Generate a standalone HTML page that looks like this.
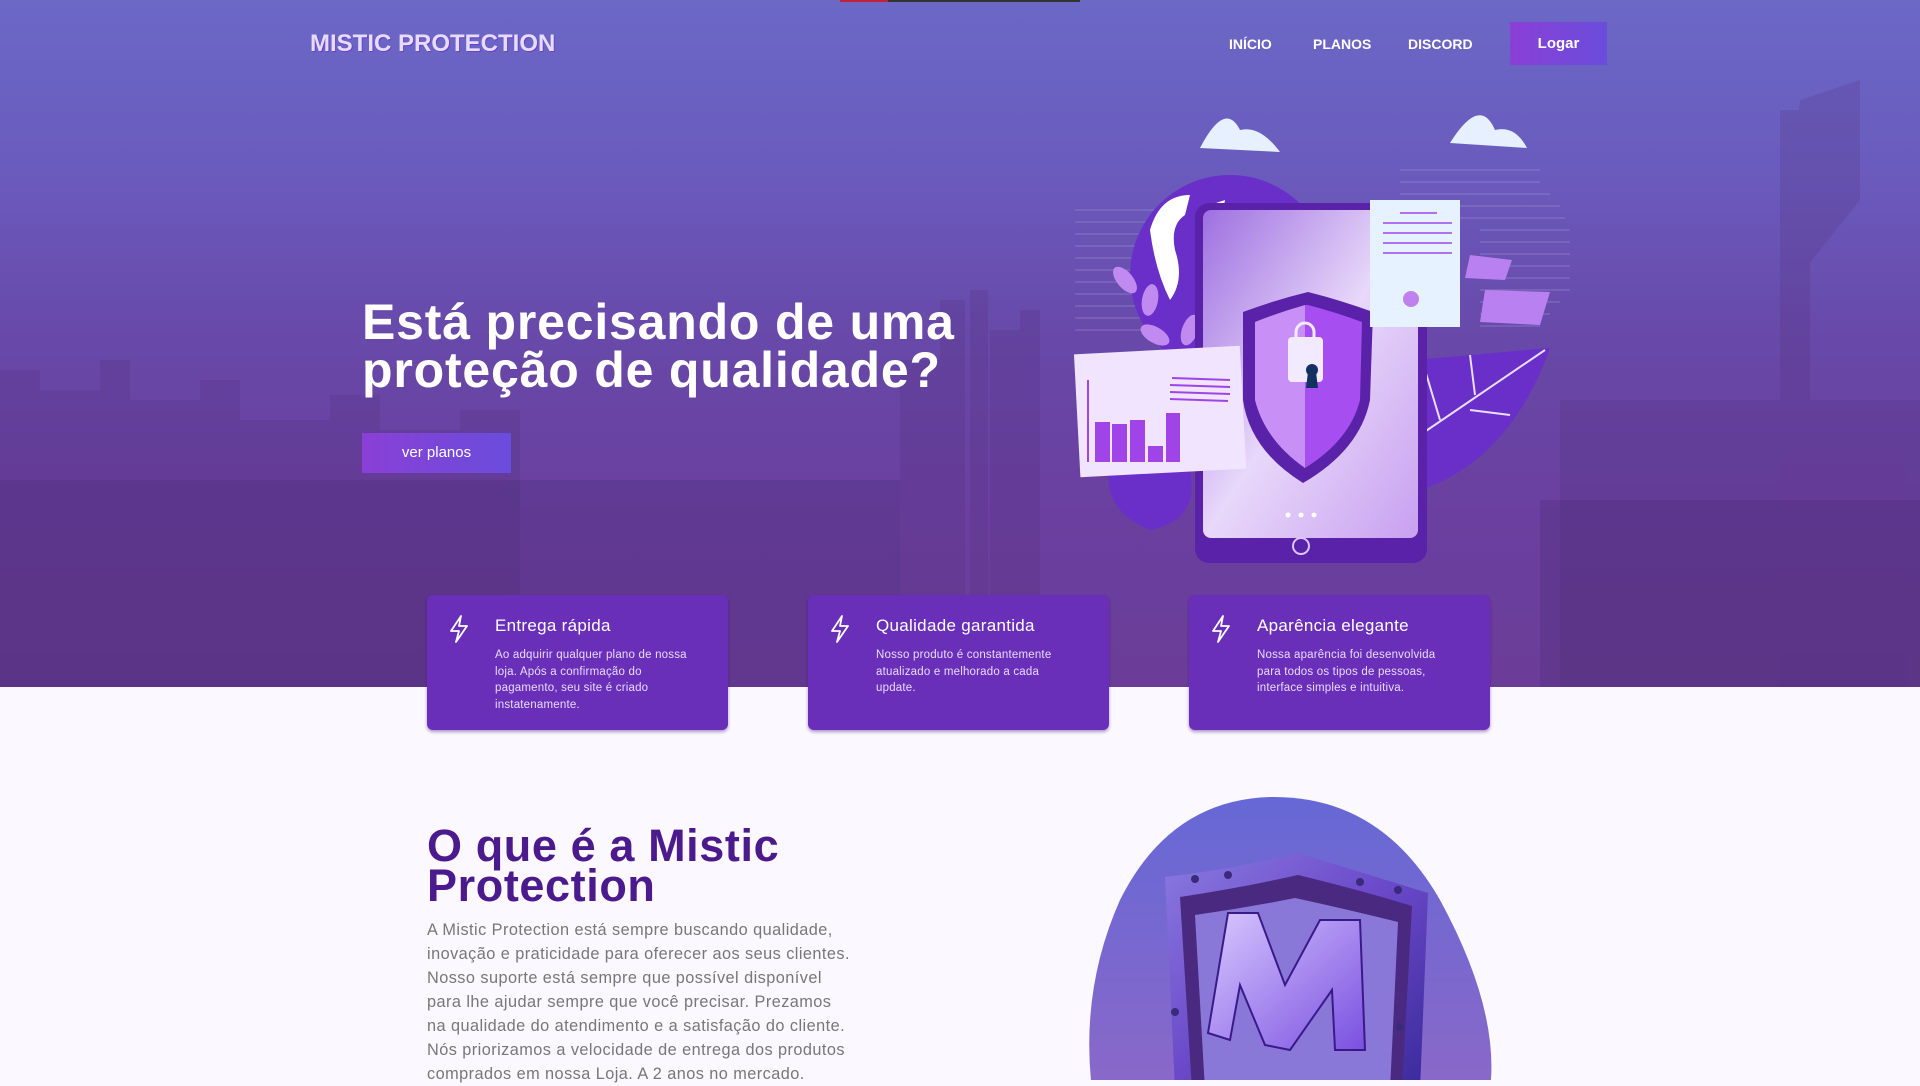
<!DOCTYPE html>
<html><head><meta charset="utf-8">
<style>
*{margin:0;padding:0;box-sizing:border-box}
body{width:1920px;height:1080px;overflow:hidden;background:#fbf8ff;font-family:"Liberation Sans",sans-serif;position:relative}
.hero{position:absolute;left:0;top:0;width:1920px;height:687px;background:linear-gradient(180deg,#6b68c6 0%,#6a5bbd 25%,#6848a8 50%,#6a3f9f 75%,#6b3d98 100%);overflow:hidden}
.topbar{position:absolute;left:840px;top:0;width:240px;height:2px;background:#333}
.topbar:before{content:"";position:absolute;left:0;top:0;width:48px;height:2px;background:#c0203a}
.logo{position:absolute;left:310px;top:30px;font-size:24px;font-weight:bold;color:#e6dcff;text-shadow:1px 1px 0 #6a3fd0}
.nav{position:absolute;top:36px;font-size:14px;font-weight:bold;color:#fff}
.logar{position:absolute;left:1510px;top:22px;width:97px;height:43px;background:linear-gradient(90deg,#8a3fd6,#6a4ddc);color:#fff;font-size:15px;font-weight:bold;text-align:center;line-height:43px}
h1{position:absolute;left:362px;top:298px;font-size:50px;line-height:48px;color:#fff;font-weight:bold;letter-spacing:0.8px}
.btn{position:absolute;left:362px;top:433px;width:149px;height:40px;background:linear-gradient(90deg,#8a3fd6,#6a4ddc);color:#fff;font-size:15px;text-align:center;line-height:40px}
.card{position:absolute;top:595px;width:301px;height:135px;background:#6a2fb8;border-radius:6px;box-shadow:0 2px 3px rgba(60,0,120,.4)}
.card svg{position:absolute;left:22px;top:20px}
.card h3{position:absolute;left:68px;top:21px;font-size:17px;font-weight:normal;color:#fff;letter-spacing:0.3px}
.card p{position:absolute;left:68px;top:52px;width:230px;font-size:11.5px;line-height:16.5px;color:#e8dcff;white-space:nowrap;letter-spacing:0.2px}
h2{position:absolute;left:427px;top:826px;font-size:45px;line-height:40px;color:#4b1a8c;font-weight:bold;letter-spacing:0.6px}
.about{position:absolute;left:427px;top:918px;width:500px;font-size:16.3px;line-height:24px;color:#777;white-space:nowrap;letter-spacing:0.45px}
</style></head><body>
<div class="hero">
<svg width="1920" height="687" style="position:absolute;left:0;top:0">
<g fill="#4a2a70" opacity="0.18">
<rect x="0" y="370" width="40" height="320"/><rect x="40" y="390" width="60" height="300"/><rect x="100" y="360" width="30" height="330"/><rect x="130" y="400" width="70" height="290"/><rect x="200" y="380" width="40" height="310"/><rect x="240" y="420" width="90" height="270"/><rect x="330" y="395" width="50" height="300"/><rect x="380" y="430" width="80" height="260"/><rect x="460" y="410" width="60" height="280"/>
<rect x="940" y="300" width="25" height="390"/><rect x="970" y="290" width="18" height="400"/><rect x="990" y="330" width="30" height="360"/><rect x="1020" y="310" width="20" height="380"/><rect x="900" y="360" width="40" height="330"/>
<rect x="1560" y="400" width="360" height="290"/><rect x="1780" y="110" width="30" height="560"/>
<path d="M1800 100 L1860 80 L1860 200 L1780 300 Z"/>
</g>
<g fill="#3a2060" opacity="0.18"><rect x="0" y="480" width="900" height="210"/><rect x="1540" y="500" width="380" height="190"/></g>
<g>
<g stroke="#9a8fd0" stroke-width="1" opacity="0.6">
<line x1="1075" y1="210" x2="1180" y2="210"/><line x1="1075" y1="222" x2="1180" y2="222"/><line x1="1075" y1="234" x2="1180" y2="234"/><line x1="1075" y1="246" x2="1180" y2="246"/><line x1="1075" y1="258" x2="1180" y2="258"/><line x1="1075" y1="270" x2="1180" y2="270"/><line x1="1075" y1="282" x2="1180" y2="282"/><line x1="1075" y1="294" x2="1180" y2="294"/><line x1="1075" y1="306" x2="1180" y2="306"/><line x1="1075" y1="318" x2="1180" y2="318"/><line x1="1075" y1="330" x2="1180" y2="330"/>
<line x1="1400" y1="170" x2="1540" y2="170"/><line x1="1400" y1="182" x2="1540" y2="182"/><line x1="1400" y1="194" x2="1550" y2="194"/><line x1="1400" y1="206" x2="1560" y2="206"/><line x1="1460" y1="218" x2="1565" y2="218"/><line x1="1480" y1="230" x2="1570" y2="230"/><line x1="1480" y1="242" x2="1570" y2="242"/><line x1="1480" y1="254" x2="1570" y2="254"/><line x1="1480" y1="266" x2="1570" y2="266"/><line x1="1480" y1="278" x2="1570" y2="278"/><line x1="1480" y1="290" x2="1570" y2="290"/><line x1="1480" y1="302" x2="1560" y2="302"/><line x1="1480" y1="314" x2="1550" y2="314"/><line x1="1480" y1="326" x2="1540" y2="326"/>
</g>
<path d="M1200 148 Q1225 100 1240 130 Q1260 125 1280 152 Z" fill="#e6f0ff"/>
<path d="M1450 143 Q1480 95 1495 130 Q1515 125 1527 148 Z" fill="#e6f0ff"/>
<circle cx="1230" cy="275" r="100" fill="#6a2fc8"/>
<path d="M1150 230 Q1160 195 1190 195 L1185 215 Q1170 225 1175 250 Q1185 280 1170 300 Q1155 270 1150 230Z" fill="#fff"/>
<path d="M1210 205 L1225 200 L1220 225 L1205 240Z" fill="#fff"/>
<g fill="#c08af0"><ellipse cx="1125" cy="280" rx="8" ry="16" transform="rotate(-40 1125 280)"/><ellipse cx="1150" cy="300" rx="8" ry="16" transform="rotate(10 1150 300)"/><ellipse cx="1155" cy="335" rx="8" ry="16" transform="rotate(-60 1155 335)"/><ellipse cx="1190" cy="330" rx="8" ry="16" transform="rotate(20 1190 330)"/></g>
<path d="M1110 460 Q1100 510 1150 530 Q1200 520 1190 470 Z" fill="#6a2fc8"/>
<path d="M1415 360 L1550 348 Q1510 460 1420 490 Z" fill="#6a2fc8"/>
<g stroke="#e8e0ff" stroke-width="2"><line x1="1420" y1="435" x2="1545" y2="350"/><line x1="1440" y1="420" x2="1425" y2="370"/><line x1="1475" y1="395" x2="1470" y2="355"/><line x1="1470" y1="410" x2="1510" y2="415"/></g>
<rect x="1195" y="203" width="232" height="360" rx="14" fill="#5a22a8"/>
<rect x="1203" y="210" width="215" height="328" rx="8" fill="url(#scr)"/>
<circle cx="1301" cy="546" r="8" fill="none" stroke="#d8c8ff" stroke-width="2"/>
<circle cx="1288" cy="515" r="2.5" fill="#fff"/><circle cx="1301" cy="515" r="2.5" fill="#fff"/><circle cx="1314" cy="515" r="2.5" fill="#fff"/>
<path d="M1308 292 Q1340 300 1373 312 L1370 400 Q1360 450 1303 483 Q1250 450 1243 400 L1243 312 Q1275 300 1308 292Z" fill="#5a22a8"/>
<path d="M1308 305 Q1335 312 1362 322 L1360 400 Q1350 440 1305 468 L1305 305Z" fill="#a64ef0"/>
<path d="M1305 305 Q1280 312 1255 322 L1255 400 Q1265 440 1305 468Z" fill="#c890f6"/>
<rect x="1288" y="337" width="35" height="45" rx="4" fill="#f2eaff"/>
<path d="M1296 340 v-8 a9 9 0 0 1 18 0 v8" fill="none" stroke="#f2eaff" stroke-width="3"/>
<circle cx="1312" cy="370" r="6" fill="#123060"/><path d="M1308 372 h8 l2 16 h-12z" fill="#123060"/>
<rect x="1370" y="200" width="90" height="127" fill="#e6f2ff"/>
<g stroke="#b070f0" stroke-width="2"><line x1="1400" y1="213" x2="1437" y2="213"/><line x1="1383" y1="223" x2="1452" y2="223"/><line x1="1383" y1="233" x2="1452" y2="233"/><line x1="1383" y1="243" x2="1452" y2="243"/><line x1="1383" y1="253" x2="1452" y2="253"/></g>
<circle cx="1411" cy="299" r="8" fill="#c080f0"/>
<path d="M1470 255 L1512 260 L1505 280 L1465 278Z" fill="#b880f0"/>
<path d="M1485 290 L1550 292 L1540 325 L1480 322Z" fill="#b880f0"/>
<rect x="1077" y="350" width="166" height="123" fill="#f0e4ff" transform="rotate(-3 1160 410)"/>
<g fill="#a044e8"><rect x="1095" y="422" width="15" height="40"/><rect x="1112" y="424" width="15" height="38"/><rect x="1130" y="420" width="15" height="42"/><rect x="1148" y="446" width="15" height="16"/><rect x="1166" y="413" width="14" height="49"/></g>
<line x1="1088" y1="380" x2="1088" y2="462" stroke="#a044e8" stroke-width="2"/>
<g stroke="#a044e8" stroke-width="2"><line x1="1172" y1="378" x2="1230" y2="380"/><line x1="1170" y1="385" x2="1230" y2="387"/><line x1="1170" y1="392" x2="1230" y2="394"/><line x1="1170" y1="399" x2="1228" y2="401"/></g>
</g>
<defs><linearGradient id="scr" x1="0" y1="0" x2="1" y2="1"><stop offset="0" stop-color="#9e70e0"/><stop offset="0.5" stop-color="#e8d8fa"/><stop offset="1" stop-color="#c8a0f0"/></linearGradient></defs>
</svg>
</div>
<div class="topbar"></div>
<div class="logo">MISTIC PROTECTION</div>
<div class="nav" style="left:1229px">INÍCIO</div>
<div class="nav" style="left:1313px">PLANOS</div>
<div class="nav" style="left:1408px">DISCORD</div>
<div class="logar">Logar</div>
<h1>Está precisando de uma<br>proteção de qualidade?</h1>
<div class="btn">ver planos</div>

<div class="card" style="left:427px"><svg width="20" height="28" viewBox="0 0 20 28"><path d="M12 1 L2 16 H10 L7 27 L18 11 H10 Z" fill="none" stroke="#fff" stroke-width="1.8" stroke-linejoin="round"/></svg><h3>Entrega rápida</h3><p>Ao adquirir qualquer plano de nossa<br>loja. Após a confirmação do<br>pagamento, seu site é criado<br>instatenamente.</p></div>
<div class="card" style="left:808px"><svg width="20" height="28" viewBox="0 0 20 28"><path d="M12 1 L2 16 H10 L7 27 L18 11 H10 Z" fill="none" stroke="#fff" stroke-width="1.8" stroke-linejoin="round"/></svg><h3>Qualidade garantida</h3><p>Nosso produto é constantemente<br>atualizado e melhorado a cada<br>update.</p></div>
<div class="card" style="left:1189px"><svg width="20" height="28" viewBox="0 0 20 28"><path d="M12 1 L2 16 H10 L7 27 L18 11 H10 Z" fill="none" stroke="#fff" stroke-width="1.8" stroke-linejoin="round"/></svg><h3>Aparência elegante</h3><p>Nossa aparência foi desenvolvida<br>para todos os tipos de pessoas,<br>interface simples e intuitiva.</p></div>

<h2>O que é a Mistic<br>Protection</h2>
<div class="about">A Mistic Protection está sempre buscando qualidade,<br>inovação e praticidade para oferecer aos seus clientes.<br>Nosso suporte está sempre que possível disponível<br>para lhe ajudar sempre que você precisar. Prezamos<br>na qualidade do atendimento e a satisfação do cliente.<br>Nós priorizamos a velocidade de entrega dos produtos<br>comprados em nossa Loja. A 2 anos no mercado.</div>

<svg width="420" height="290" style="position:absolute;left:1080px;top:790px">
<defs>
<linearGradient id="bl" x1="0" y1="0" x2="0" y2="1"><stop offset="0" stop-color="#6668d6"/><stop offset="1" stop-color="#8a68c8"/></linearGradient>
<linearGradient id="sh" x1="0" y1="0" x2="1" y2="1"><stop offset="0" stop-color="#8a7ae0"/><stop offset="0.5" stop-color="#6a48c8"/><stop offset="1" stop-color="#3a2a9a"/></linearGradient>
<linearGradient id="mm" x1="0" y1="0" x2="1" y2="1"><stop offset="0" stop-color="#d8c8ff"/><stop offset="1" stop-color="#7a50e0"/></linearGradient>
</defs>
<path d="M190 7 Q300 5 360 110 Q420 220 410 300 L12 300 Q0 200 40 110 Q90 10 190 7Z" fill="url(#bl)"/>
<path d="M85 87 Q150 80 218 63 Q290 85 348 103 L340 300 L95 300 Z" fill="url(#sh)"/>
<path d="M100 107 Q160 98 218 85 Q280 100 332 116 L322 300 L112 300 Z" fill="#4a2a80"/>
<path d="M115 125 Q165 118 215 108 Q270 120 318 132 L310 300 L125 300 Z" fill="#8a78d8"/>
<path d="M128 243 L148 123 L178 123 L205 195 L240 130 L280 130 L285 260 L255 260 L252 200 L210 260 L185 255 L160 195 L150 250 Z" fill="url(#mm)" stroke="#3a1a8a" stroke-width="2"/>
<g fill="#3a2a7a"><circle cx="115" cy="89" r="4"/><circle cx="148" cy="85" r="4"/><circle cx="280" cy="92" r="4"/><circle cx="318" cy="100" r="4"/><circle cx="95" cy="222" r="4"/><circle cx="320" cy="237" r="4"/></g>
</svg>
</body></html>
